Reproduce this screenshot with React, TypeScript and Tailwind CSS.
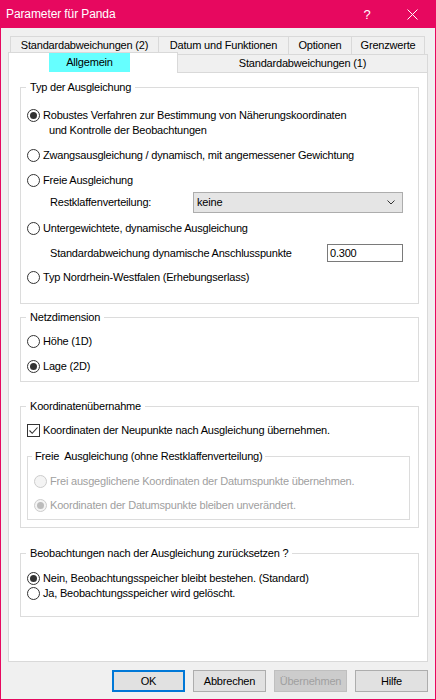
import React from "react"

function RadioDot({ checked, disabled }: { checked?: boolean, disabled?: boolean }) {
  return (
    <span
      className={
        "flex w-[13px] h-[13px] shrink-0 items-center justify-center rounded-full border " +
        (disabled ? "border-[#cccccc] bg-[#f4f4f4]" : "border-[#333333] bg-white")
      }
    >
      { checked && (
        <span className={"w-[7px] h-[7px] rounded-full " + (disabled ? "bg-[#bcbcbc]" : "bg-[#333333]")} />
      ) }
    </span>
  )
}

function Radio({ checked, disabled, children, className = "" }: {
  checked?: boolean, disabled?: boolean, children: React.ReactNode, className?: string
}) {
  return (
    <div className={"flex items-center h-[15px] " + className}>
      <RadioDot checked={ checked } disabled={ disabled } />
      <span className={"ml-[3px] whitespace-nowrap " + (disabled ? "text-[#a0a0a0]" : "")}>{ children }</span>
    </div>
  )
}

function Legend({ children, className = "ml-[5px] px-[4px]" }: { children: React.ReactNode, className?: string }) {
  return <legend className={"h-[14px] leading-[14px] " + className}>{ children }</legend>
}

export default function App() {
  return (
    <div className="w-[436px] h-[700px] flex flex-col border border-[#e7085f] bg-[#f0f0f0] text-[11px] tracking-[-0.2px] leading-[15px] text-black font-['Liberation_Sans',Arial,sans-serif]">
      {/* title bar */}
      <div className="h-[27px] shrink-0 flex items-center bg-[#e7085f] text-white text-[12px] tracking-[-0.1px]">
        <span className="pl-[5px] flex-1">Parameter für Panda</span>
        <span className="w-[44px] text-center text-[13px]">?</span>
        <span className="w-[46px] flex justify-center">
          <svg width="11" height="11" viewBox="0 0 11 11">
            <path d="M0.5 0.5 L10.5 10.5 M10.5 0.5 L0.5 10.5" stroke="white" strokeWidth="1" fill="none" />
          </svg>
        </span>
      </div>

      {/* tabs */}
      <div className="ml-[7px] mt-[8px] w-[420px]">
        <div className="flex ml-[2px] h-[18px]">
          <div className="w-[148px] flex items-center justify-center border-l border-t border-[#d9d9d9]">Standardabweichungen (2)</div>
          <div className="w-[130px] flex items-center justify-center border-l border-t border-[#d9d9d9]">Datum und Funktionen</div>
          <div className="w-[63px] flex items-center justify-center border-l border-t border-[#d9d9d9]">Optionen</div>
          <div className="w-[74px] flex items-center justify-center border-x border-t border-[#d9d9d9]">Grenzwerte</div>
        </div>
        <div className="relative z-10 flex items-start h-[18px]">
          <div className="w-[170px] h-[21px] -mt-[2px] bg-white border-x border-t border-[#d9d9d9] flex">
            <span className="ml-[40px] w-[81px] h-[19px] bg-[#66ffff] flex items-center justify-center">Allgemein</span>
          </div>
          <div className="flex-1 h-[18px] flex items-center justify-center border-t border-r border-[#d9d9d9]">Standardabweichungen (1)</div>
        </div>

        {/* panel */}
        <div className="h-[590px] bg-white border border-[#d9d9d9] pt-[7px]">
          <fieldset className="ml-[11px] w-[399px] min-w-0 border border-[#dcdcdc] pb-[18px]">
            <Legend>Typ der Ausgleichung</Legend>
            <div className="pl-[6px]">
              <div className="flex items-start mt-[14px]">
                <span className="mt-[1px]"><RadioDot checked /></span>
                <div className="ml-[3px]">
                  <div>Robustes Verfahren zur Bestimmung von Näherungskoordinaten</div>
                  <div className="pl-[6px]">und Kontrolle der Beobachtungen</div>
                </div>
              </div>
              <Radio className="mt-[10px]">Zwangsausgleichung / dynamisch, mit angemessener Gewichtung</Radio>
              <Radio className="mt-[10px]">Freie Ausgleichung</Radio>
              <div className="flex items-center mt-[4px] pl-[23px]">
                <span className="w-[143px]">Restklaffenverteilung:</span>
                <div className="w-[210px] h-[21px] flex items-center justify-between bg-[#e5e5e5] border border-[#adadad] pl-[3px] pr-[7px]">
                  <span>keine</span>
                  <svg width="8" height="5" viewBox="0 0 8 5">
                    <path d="M0.5 0.5 L4 4 L7.5 0.5" stroke="#333" strokeWidth="1" fill="none" />
                  </svg>
                </div>
              </div>
              <Radio className="mt-[8px]">Untergewichtete, dynamische Ausgleichung</Radio>
              <div className="flex items-center mt-[8px] pl-[23px]">
                <span className="w-[277px]">Standardabweichung dynamische Anschlusspunkte</span>
                <div className="w-[76px] h-[18px] flex items-center border border-[#7a7a7a] pl-[2px]">0.300</div>
              </div>
              <Radio className="mt-[8px]">Typ Nordrhein-Westfalen (Erhebungserlass)</Radio>
            </div>
          </fieldset>

          <fieldset className="ml-[11px] mt-[6px] w-[399px] min-w-0 border border-[#dcdcdc] pb-[7px]">
            <Legend>Netzdimension</Legend>
            <div className="pl-[6px]">
              <Radio className="mt-[10px]">Höhe (1D)</Radio>
              <Radio checked className="mt-[10px]">Lage (2D)</Radio>
            </div>
          </fieldset>

          <fieldset className="ml-[11px] mt-[17px] w-[399px] min-w-0 border border-[#dcdcdc] pb-[7px]">
            <Legend>Koordinatenübernahme</Legend>
            <div className="pl-[6px] mt-[10px] flex items-center h-[15px]">
              <span className="w-[13px] h-[13px] border border-[#333333] bg-white flex items-center justify-center">
                <svg width="11" height="11" viewBox="0 0 11 11">
                  <path d="M1.5 5.5 L4.2 8.3 L9.5 2.5" stroke="#333" strokeWidth="1.1" fill="none" />
                </svg>
              </span>
              <span className="ml-[3px]">Koordinaten der Neupunkte nach Ausgleichung übernehmen.</span>
            </div>
            <fieldset className="ml-[6px] mt-[11px] w-[383px] min-w-0 border border-[#dcdcdc] pb-[6px]">
              <Legend className="ml-[4px] px-[3px]">Freie&nbsp; Ausgleichung (ohne Restklaffenverteilung)</Legend>
              <div className="pl-[6px]">
                <Radio disabled className="mt-[11px]">Frei ausgeglichene Koordinaten der Datumspunkte übernehmen.</Radio>
                <Radio disabled checked className="mt-[9px]">Koordinaten der Datumspunkte bleiben unverändert.</Radio>
              </div>
            </fieldset>
          </fieldset>

          <fieldset className="ml-[11px] mt-[18px] w-[399px] min-w-0 border border-[#dcdcdc] pb-[15px]">
            <Legend>Beobachtungen nach der Ausgleichung zurücksetzen ?</Legend>
            <div className="pl-[6px]">
              <Radio checked className="mt-[11px]">Nein, Beobachtungsspeicher bleibt bestehen. (Standard)</Radio>
              <Radio>Ja, Beobachtungsspeicher wird gelöscht.</Radio>
            </div>
          </fieldset>
        </div>
      </div>

      {/* buttons */}
      <div className="flex justify-end gap-[8px] mt-[8px] mr-[7px]">
        <button className="w-[73px] h-[22px] bg-[#e1e1e1] border-2 border-[#0078d7]">OK</button>
        <button className="w-[73px] h-[22px] bg-[#e1e1e1] border border-[#adadad]">Abbrechen</button>
        <button className="w-[73px] h-[22px] bg-[#cccccc] border border-[#bfbfbf] text-[#a0a0a0]" disabled>Übernehmen</button>
        <button className="w-[73px] h-[22px] bg-[#e1e1e1] border border-[#adadad]">Hilfe</button>
      </div>
    </div>
  )
}
